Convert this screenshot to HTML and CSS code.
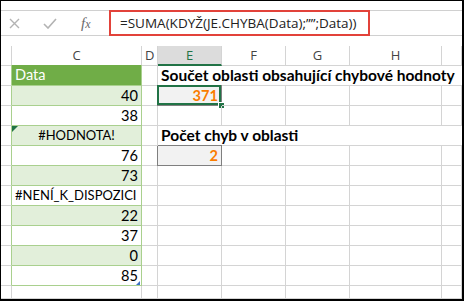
FILE: index.html
```html
<!DOCTYPE html>
<html lang="cs">
<head>
    <meta charset="UTF-8">
    <title>SUMA s chybovými hodnotami</title>
    <link rel="stylesheet" href="styles.css">
</head>
<body>
    <div class="frame">
        <div class="toolbar">
            <div class="fbar">
                <div class="fbar-icons">
                    <svg class="ico-x" width="11" height="11" viewBox="0 0 11 11">
                        <path d="M1 1 L10 10 M10 1 L1 10" stroke="#b3b3b3" stroke-width="1.4" fill="none"/>
                    </svg>
                    <svg class="ico-check" width="14" height="11" viewBox="0 0 14 11">
                        <path d="M1 6 L5 10 L13 1" stroke="#b3b3b3" stroke-width="1.6" fill="none"/>
                    </svg>
                    <span class="fx">f<span class="fx-x">x</span></span>
                </div>
                <div class="formula">=SUMA(KDYŽ(JE.CHYBA(Data);””;Data))</div>
            </div>
        </div>

        <div class="sheet">
            <div class="row head">
                <div class="rh"></div><div>C</div><div>D</div><div class="sel">E</div><div>F</div><div>G</div><div>H</div><div></div>
            </div>
            <div class="row tbl first">
                <div class="rh"></div><div class="c th">Data</div><div></div><div class="note">Součet oblasti obsahující chybové hodnoty</div>
            </div>
            <div class="row tbl">
                <div class="rh"></div><div class="c band num">40</div><div></div><div class="calc active">371</div><div></div><div></div><div></div><div></div>
            </div>
            <div class="row tbl">
                <div class="rh"></div><div class="c num">38</div><div></div><div></div><div></div><div></div><div></div><div></div>
            </div>
            <div class="row tbl">
                <div class="rh"></div><div class="c band err mark">#HODNOTA!</div><div></div><div class="note">Počet chyb v oblasti</div>
            </div>
            <div class="row tbl">
                <div class="rh"></div><div class="c num">76</div><div></div><div class="calc">2</div><div></div><div></div><div></div><div></div>
            </div>
            <div class="row tbl">
                <div class="rh"></div><div class="c band num">73</div><div></div><div></div><div></div><div></div><div></div><div></div>
            </div>
            <div class="row tbl">
                <div class="rh"></div><div class="c err">#NENÍ_K_DISPOZICI</div><div></div><div></div><div></div><div></div><div></div><div></div>
            </div>
            <div class="row tbl">
                <div class="rh"></div><div class="c band num">22</div><div></div><div></div><div></div><div></div><div></div><div></div>
            </div>
            <div class="row tbl">
                <div class="rh"></div><div class="c num">37</div><div></div><div></div><div></div><div></div><div></div><div></div>
            </div>
            <div class="row tbl">
                <div class="rh"></div><div class="c band num">0</div><div></div><div></div><div></div><div></div><div></div><div></div>
            </div>
            <div class="row tbl">
                <div class="rh"></div><div class="c num last">85</div><div></div><div></div><div></div><div></div><div></div><div></div>
            </div>
            <div class="row tail">
                <div class="rh"></div><div></div><div></div><div></div><div></div><div></div><div></div><div></div>
            </div>
        </div>
    </div>
</body>
</html>
```

FILE: styles.css
```css
body {
    margin: 0;
    background: #fff;
}
.frame {
    width: 464px;
    height: 301px;
    box-sizing: border-box;
    border-style: solid;
    border-color: #000;
    border-width: 1px 2px 2px 1px;
    overflow: hidden;
    background: #fff;
    font-family: Lato, "Open Sans", sans-serif;
}

/* formula bar */
.toolbar {
    height: 45px;
    padding-top: 9px;
    box-sizing: border-box;
}
.fbar {
    display: flex;
    height: 26px;
    box-sizing: border-box;
    border-top: 1px solid #d0d0d0;
    border-bottom: 1px solid #d0d0d0;
}
.fbar-icons {
    width: 108px;
    display: flex;
    align-items: center;
}
.ico-x {
    margin-left: 8px;
}
.ico-check {
    margin-left: 23px;
}
.fx {
    margin-left: 24px;
    font-family: "Liberation Serif", serif;
    font-style: italic;
    font-size: 15px;
    color: #6a6a6a;
    line-height: 1;
}
.fx-x {
    font-size: 12px;
}
.formula {
    width: 261px;
    height: 26px;
    margin: -1px 0;
    box-sizing: border-box;
    border: 2px solid #e2423a;
    padding-left: 9px;
    font-family: "Open Sans", sans-serif;
    font-size: 13.5px;
    line-height: 22px;
    color: #222;
    white-space: nowrap;
    overflow: hidden;
}

/* grid */
.row {
    display: grid;
    grid-template-columns: 11px 130px 16px 64px 64px 64px 92px 20px;
    height: 20px;
}
.row > div {
    position: relative;
    box-sizing: border-box;
    border-right: 1px solid #d4d4d4;
    border-bottom: 1px solid #d4d4d4;
    font-size: 14.6px;
    line-height: 19px;
    padding: 0 3px;
    white-space: nowrap;
    color: #000;
}
.row.first {
    height: 21px;
}
.row.first > div {
    line-height: 20px;
}
.row.tail {
    height: 13px;
}
.row.head {
    height: 19px;
}
.row.head > div {
    font-family: "Open Sans", sans-serif;
    font-size: 13px;
    line-height: 18px;
    text-align: center;
    color: #444;
}
.row.head > .sel {
    background: #dcdcdc;
    border-bottom: 2px solid #217346;
    color: #217346;
}

/* data table in column C */
.tbl > .rh {
    border-right-color: #a9d08e;
}
.tbl > .c {
    border-right-color: #a9d08e;
    border-bottom-color: #a9d08e;
}
.c.th {
    background: #70ad47;
    color: #fff;
}
.c.band {
    background: #e2efda;
}
.c.num {
    text-align: right;
}
.row > .c.err {
    font-size: 13px;
}
.c.mark {
    text-align: center;
}
.c.mark::before {
    content: "";
    position: absolute;
    top: 0;
    left: 0;
    border-top: 6px solid #217346;
    border-right: 6px solid transparent;
}
.c.last::after {
    content: "";
    position: absolute;
    right: 1px;
    bottom: 0;
    border-bottom: 4px solid #3b6fc4;
    border-left: 4px solid transparent;
}

/* labels and results */
.row > .note {
    grid-column: span 5;
    font-weight: bold;
    font-size: 15.5px;
    border-right: none;
}
.row > .calc {
    background: #f2f2f2;
    border-color: #7f7f7f;
    box-shadow: 0 -1px 0 #7f7f7f, -1px 0 0 #7f7f7f;
    color: #fa7d00;
    font-weight: bold;
    text-align: right;
}
.calc.active::before {
    content: "";
    position: absolute;
    top: -1px;
    left: -1px;
    right: 0;
    bottom: 0;
    border: 2px solid #217346;
}
.calc.active::after {
    content: "";
    position: absolute;
    right: -4px;
    bottom: -4px;
    width: 5px;
    height: 5px;
    background: #217346;
    border: 1px solid #fff;
}
```
